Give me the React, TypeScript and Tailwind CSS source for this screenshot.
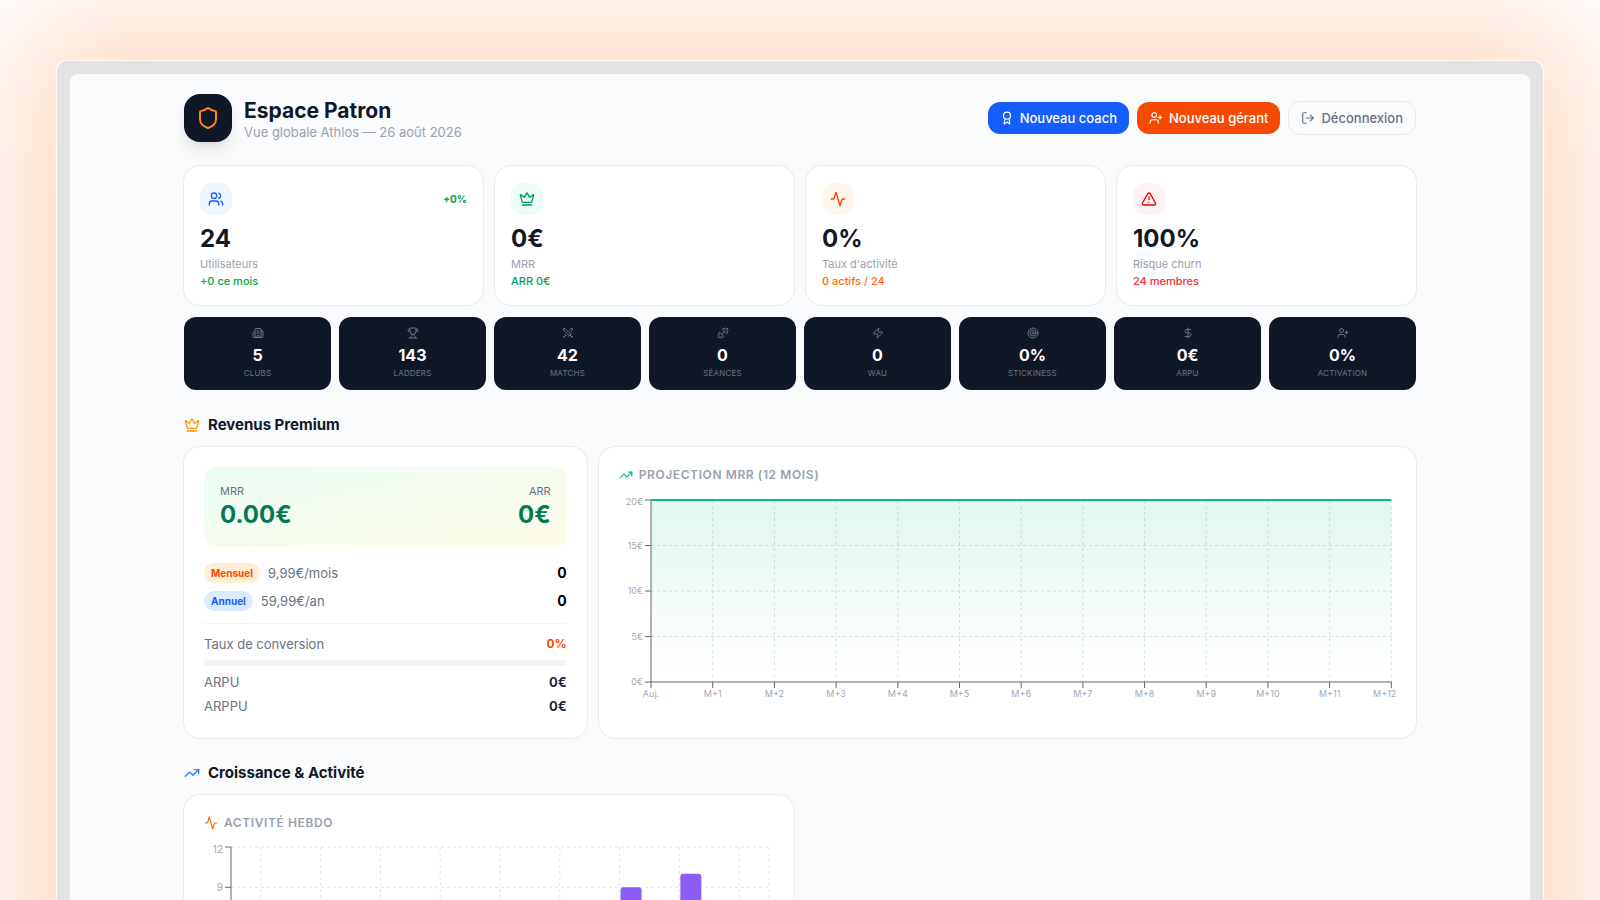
import type { ReactNode } from "react";
import {
  Activity,
  Award,
  Building2,
  Crown,
  DollarSign,
  Dumbbell,
  LogOut,
  Shield,
  Swords,
  Target,
  TrendingUp,
  TriangleAlert,
  Trophy,
  UserPlus,
  Users,
  Zap,
  type LucideIcon,
} from "lucide-react";

type Kpi = {
  icon: LucideIcon;
  tint: string;
  value: string;
  label: string;
  note: string;
  noteColor: string;
  trend?: string;
};

const kpis: Kpi[] = [
  { icon: Users, tint: "bg-blue-50 text-blue-600", value: "24", label: "Utilisateurs", note: "+0 ce mois", noteColor: "text-green-600", trend: "+0%" },
  { icon: Crown, tint: "bg-emerald-50 text-emerald-600", value: "0€", label: "MRR", note: "ARR 0€", noteColor: "text-emerald-600" },
  { icon: Activity, tint: "bg-orange-50 text-orange-600", value: "0%", label: "Taux d'activité", note: "0 actifs / 24", noteColor: "text-orange-500" },
  { icon: TriangleAlert, tint: "bg-red-50 text-red-600", value: "100%", label: "Risque churn", note: "24 membres", noteColor: "text-red-500" },
];

const tiles: { icon: LucideIcon; value: string; label: string }[] = [
  { icon: Building2, value: "5", label: "CLUBS" },
  { icon: Trophy, value: "143", label: "LADDERS" },
  { icon: Swords, value: "42", label: "MATCHS" },
  { icon: Dumbbell, value: "0", label: "SÉANCES" },
  { icon: Zap, value: "0", label: "WAU" },
  { icon: Target, value: "0%", label: "STICKINESS" },
  { icon: DollarSign, value: "0€", label: "ARPU" },
  { icon: UserPlus, value: "0%", label: "ACTIVATION" },
];

const plans = [
  { name: "Mensuel", price: "9,99€/mois", count: 0, badge: "bg-orange-100 text-orange-600" },
  { name: "Annuel", price: "59,99€/an", count: 0, badge: "bg-blue-100 text-blue-600" },
];

function Card({ className, children }: { className: string; children: ReactNode }) {
  return <div className={`rounded-2xl bg-white ring-1 ring-[#e9ebed] ${className}`}>{children}</div>;
}

function SectionTitle({ icon: Icon, color, children }: { icon: LucideIcon; color: string; children: ReactNode }) {
  return (
    <h2 className="mt-6 mb-[11px] flex items-center gap-2 text-[15px] leading-[22px] font-bold text-gray-900">
      <Icon size={16} className={color} />
      {children}
    </h2>
  );
}

function ChartTitle({ icon: Icon, color, children }: { icon: LucideIcon; color: string; children: ReactNode }) {
  return (
    <h3 className="flex items-center gap-1.5 text-xs leading-4 font-semibold tracking-wider text-gray-400 uppercase">
      <Icon size={14} className={color} />
      {children}
    </h3>
  );
}

function ProjectionChart() {
  const left = 32;
  const right = 772;
  const top = 5;
  const bottom = 187;
  const months = Array.from({ length: 13 }, (_, i) => (i === 0 ? "Auj." : `M+${i}`));
  const amounts = [0, 5, 10, 15, 20];
  const x = (i: number) => left + ((right - left) * i) / 12;
  const y = (v: number) => bottom - ((bottom - top) * v) / 20;
  return (
    <svg viewBox="0 0 777 223" className="mt-3 block w-full" role="img" aria-label="Projection MRR sur 12 mois">
      <defs>
        <linearGradient id="mrr" x1="0" y1="0" x2="0" y2="1">
          <stop offset="0" stopColor="#10b981" stopOpacity="0.12" />
          <stop offset="0.95" stopColor="#10b981" stopOpacity="0" />
        </linearGradient>
      </defs>
      <g stroke="#dde0e1" strokeDasharray="3 3">
        {amounts.slice(1).map((v) => (
          <line key={v} x1={left} x2={right} y1={y(v)} y2={y(v)} />
        ))}
        {months.slice(1).map((m, i) => (
          <line key={m} x1={x(i + 1)} x2={x(i + 1)} y1={top} y2={bottom} />
        ))}
      </g>
      <rect x={left} y={top} width={right - left} height={bottom - top} fill="url(#mrr)" />
      <g stroke="#666">
        <path d={`M${left} ${top}V${bottom}H${right}`} fill="none" />
        {amounts.map((v) => (
          <line key={v} x1={left - 6} x2={left} y1={y(v)} y2={y(v)} />
        ))}
        {months.map((m, i) => (
          <line key={m} x1={x(i)} x2={x(i)} y1={bottom} y2={bottom + 6} />
        ))}
      </g>
      <line x1={left} x2={right} y1={top} y2={top} stroke="#10b981" strokeWidth="2" />
      <g fill="#a3a8b0" fontSize="9">
        {amounts.map((v) => (
          <text key={v} x={left - 8} y={(v === 20 ? y(v) + 2 : y(v)) + 3} textAnchor="end">
            {`${v}€`}
          </text>
        ))}
        {months.map((m, i) => (
          <text key={m} x={i === 12 ? right + 5 : x(i)} y={bottom + 15} textAnchor={i === 12 ? "end" : "middle"}>
            {m}
          </text>
        ))}
      </g>
    </svg>
  );
}

function WeeklyChart() {
  const left = 27;
  const right = 565;
  const top = 4;
  const bottom = 165;
  const weeks = [0, 0, 0, 0, 0, 0, 9, 10, 0];
  const levels = [0, 3, 6, 9, 12];
  const labelled = [9, 12];
  const step = (right - left) / weeks.length;
  const center = (i: number) => left + step * (i + 0.5);
  const y = (v: number) => bottom - ((bottom - top) * v) / 12;
  return (
    <svg viewBox="0 0 570 201" className="mt-3 block w-full" role="img" aria-label="Activité hebdomadaire">
      <g stroke="#e2e4e7" strokeDasharray="3 3">
        {levels.map((v) => (
          <line key={v} x1={left} x2={right} y1={y(v)} y2={y(v)} />
        ))}
        {weeks.map((_, i) => (
          <line key={i} x1={center(i)} x2={center(i)} y1={top} y2={bottom} />
        ))}
        <line x1={right} x2={right} y1={top} y2={bottom} />
      </g>
      <g fill="#8b5cf6">
        {weeks.map((v, i) =>
          v > 0 ? (
            <path key={i} d={`M${center(i) + 1} ${bottom}V${y(v) + 3}q0-3 3-3h15q3 0 3 3V${bottom}z`} />
          ) : null,
        )}
      </g>
      <g stroke="#666">
        <path d={`M${left} ${top}V${bottom}H${right}`} fill="none" />
        {levels.map((v) => (
          <line key={v} x1={left - 6} x2={left} y1={y(v)} y2={y(v)} />
        ))}
      </g>
      <g fill="#a3a8b0" fontSize="10" textAnchor="end">
        {labelled.map((v) => (
          <text key={v} x={left - 8} y={(v === 12 ? y(v) + 2 : y(v)) + 4}>
            {v}
          </text>
        ))}
      </g>
    </svg>
  );
}

export default function App() {
  return (
    <div className="h-screen overflow-hidden bg-white px-[57px] pt-[61px] font-['Inter',sans-serif]">
      <div className="min-h-screen rounded-[10px] border-[13px] border-[#e3e3e3] bg-[#e3e3e3] shadow-[0_0_0_1px_#fffaf5,0_0_130px_30px_rgba(255,105,0,0.27)]">
        <div className="min-h-screen rounded-t-lg bg-[#fafbfd] pt-5 pb-10">
          <main className="mx-auto max-w-[1280px] px-6">
            <header className="mb-6 flex items-center justify-between">
              <div className="flex items-center gap-3">
                <div className="flex size-12 items-center justify-center rounded-2xl bg-gray-900 text-orange-400 shadow-lg">
                  <Shield size={24} />
                </div>
                <div>
                  <h1 className="text-[21px] leading-7 font-bold text-gray-900">Espace Patron</h1>
                  <p className="text-[13px] leading-[14px] text-gray-400">Vue globale Athlos — 26 août 2026</p>
                </div>
              </div>
              <div className="flex items-center gap-2 text-[13px] leading-5 font-medium">
                <button type="button" className="flex items-center gap-1.5 rounded-xl bg-blue-600 px-3 py-1.5 text-white">
                  <Award size={14} />
                  Nouveau coach
                </button>
                <button type="button" className="flex items-center gap-1.5 rounded-xl bg-orange-600 px-3 py-1.5 text-white">
                  <UserPlus size={14} />
                  Nouveau gérant
                </button>
                <button type="button" className="flex items-center gap-1.5 rounded-xl border border-gray-200 px-3 py-1.5 text-gray-500">
                  <LogOut size={14} />
                  Déconnexion
                </button>
              </div>
            </header>

            <div className="grid grid-cols-4 gap-3">
              {kpis.map(({ icon: Icon, ...kpi }) => (
                <Card key={kpi.label} className="px-4 pt-[17px] pb-4">
                  <div className="mb-2 flex items-center justify-between">
                    <div className={`flex size-8 items-center justify-center rounded-xl ${kpi.tint}`}>
                      <Icon size={16} />
                    </div>
                    {kpi.trend && <span className="text-[10px] font-bold text-green-600">{kpi.trend}</span>}
                  </div>
                  <p className="text-2xl leading-8 font-bold text-gray-900">{kpi.value}</p>
                  <p className="text-[11px] leading-[18px] text-gray-400">{kpi.label}</p>
                  <p className={`text-[11px] leading-4 font-medium ${kpi.noteColor}`}>{kpi.note}</p>
                </Card>
              ))}
            </div>

            <div className="mt-3 grid grid-cols-8 gap-2">
              {tiles.map(({ icon: Icon, value, label }) => (
                <div key={label} className="flex flex-col items-center rounded-xl bg-gray-900 py-2.5">
                  <Icon size={12} className="mb-1 text-gray-500" />
                  <p className="text-base leading-6 font-bold text-white">{value}</p>
                  <p className="text-[8px] leading-[13px] tracking-wide text-gray-500">{label}</p>
                </div>
              ))}
            </div>

            <SectionTitle icon={Crown} color="text-amber-500">
              Revenus Premium
            </SectionTitle>
            <div className="grid grid-cols-3 gap-3">
              <Card className="p-5">
                <div className="flex justify-between rounded-xl bg-linear-to-br from-emerald-50 to-yellow-50 p-4">
                  <div>
                    <p className="text-[11px] leading-4 text-gray-500">MRR</p>
                    <p className="text-2xl leading-8 font-bold text-emerald-700">0.00€</p>
                  </div>
                  <div className="text-right">
                    <p className="text-[11px] leading-4 text-gray-500">ARR</p>
                    <p className="text-2xl leading-8 font-bold text-emerald-700">0€</p>
                  </div>
                </div>
                <div className="mt-4 flex flex-col gap-2">
                  {plans.map((plan) => (
                    <div key={plan.name} className="flex items-center gap-2 leading-5">
                      <span className={`rounded-full px-[7px] text-[10px] leading-5 font-bold ${plan.badge}`}>{plan.name}</span>
                      <span className="text-[13px] text-gray-500">{plan.price}</span>
                      <span className="ml-auto text-sm leading-5 font-bold text-black">{plan.count}</span>
                    </div>
                  ))}
                </div>
                <div className="mt-3 border-t border-gray-100 pt-2.5 text-[13px] leading-5 text-gray-500">
                  <div className="flex justify-between">
                    <span>Taux de conversion</span>
                    <span className="text-xs leading-5 font-bold text-orange-600">0%</span>
                  </div>
                  <div className="my-1.5 h-1.5 rounded-full bg-gray-100" />
                  <div className="flex justify-between">
                    <span>ARPU</span>
                    <span className="font-bold text-gray-800">0€</span>
                  </div>
                  <div className="mt-1 flex justify-between">
                    <span>ARPPU</span>
                    <span className="font-bold text-gray-800">0€</span>
                  </div>
                </div>
              </Card>
              <Card className="col-span-2 p-5">
                <ChartTitle icon={TrendingUp} color="text-emerald-500">
                  Projection MRR (12 mois)
                </ChartTitle>
                <ProjectionChart />
              </Card>
            </div>

            <SectionTitle icon={TrendingUp} color="text-blue-500">
              Croissance &amp; Activité
            </SectionTitle>
            <div className="grid grid-cols-2 gap-3">
              <Card className="p-5">
                <ChartTitle icon={Activity} color="text-orange-500">
                  Activité hebdo
                </ChartTitle>
                <WeeklyChart />
              </Card>
            </div>
          </main>
        </div>
      </div>
    </div>
  );
}
